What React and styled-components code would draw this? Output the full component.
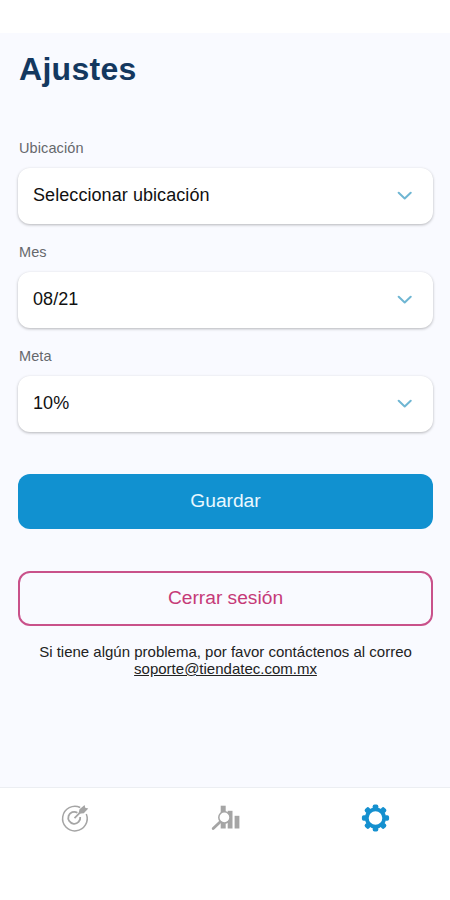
import React from 'react';
import styled, { createGlobalStyle } from 'styled-components';

const GlobalStyle = createGlobalStyle`
    body {
        margin: 0;
        background: #fff;
        font-family: "Liberation Sans", Arial, Helvetica, sans-serif;
    }
    * {
        box-sizing: border-box;
    }
`;

const Screen = styled.div`
    display: flex;
    flex-direction: column;
    width: 450px;
    height: 900px;
    padding-top: 33px;
    background: #fff;
`;

const Content = styled.main`
    flex: 1;
    padding: 17px 17px 0 18px;
    background: #f9faff;
`;

const Title = styled.h1`
    margin: 0 0 50px 0;
    padding-left: 1px;
    color: #14385f;
    font-size: 32px;
    line-height: 38px;
    letter-spacing: 0.3px;
`;

const Field = styled.div`
    margin-bottom: 18px;
`;

const Label = styled.label`
    display: block;
    margin-bottom: 10px;
    padding-left: 1px;
    color: #66686c;
    font-size: 14.5px;
    line-height: 20px;
    letter-spacing: 0.1px;
`;

const Select = styled.button`
    display: flex;
    align-items: center;
    justify-content: space-between;
    width: 100%;
    height: 56px;
    padding: 0 21px 1px 15px;
    border: 0;
    border-radius: 12px;
    background: #fff;
    box-shadow: 0 1px 3px rgba(0, 0, 0, 0.28);
    color: #111;
    font-family: inherit;
    font-size: 18px;
    letter-spacing: 0.07px;
`;

const Button = styled.button`
    display: block;
    width: 100%;
    height: 55px;
    margin-top: 42px;
    padding: 0 0 2px;
    border: ${props => props.$outline ? '2px solid #c9518a' : '0'};
    border-radius: 12px;
    background: ${props => props.$outline ? 'transparent' : '#1191d0'};
    color: ${props => props.$outline ? '#c63a78' : '#e9f8ff'};
    font-family: inherit;
    font-size: 19.2px;
`;

const Help = styled.p`
    margin: 17px 0 0 0;
    color: #222;
    font-size: 15px;
    line-height: 17px;
    text-align: center;
    white-space: nowrap;
`;

const Mail = styled.a`
    color: inherit;
    text-decoration: underline;
`;

const TabBar = styled.nav`
    display: grid;
    grid-template-columns: repeat(3, 150px);
    height: 113px;
    padding-top: 15px;
    border-top: 1px solid #eceef2;
    background: #fff;
`;

const Tab = styled.a`
    display: flex;
    justify-content: center;
    height: 30px;
    color: ${props => props.$active ? '#1590cf' : '#a5a5a5'};
`;

const Chevron = () => (
    <svg width="15" height="9" viewBox="0 0 15 9" fill="none" stroke="#6fb6d3" strokeWidth="2" strokeLinecap="round" strokeLinejoin="round">
        <path d="M1.7 1.7 L7.7 7.4 L13.7 1.7" />
    </svg>
);

const TargetIcon = () => (
    <svg width="30" height="30" viewBox="0 0 30 30" fill="none" stroke="currentColor" strokeWidth="1.5">
        <path d="M20.2 4.5 A12.3 12.3 0 1 0 26.3 11" />
        <path d="M17.4 9.7 A6 6 0 1 0 20.2 14" strokeWidth="1.8" />
        <path d="M14.5 15.2 L20 9.7" strokeWidth="1.8" />
        <path d="M18.5 10.8 L19.5 6.3 L24.6 2 L25.2 4.8 L28.3 5.4 L23.8 10.2 Z" fill="currentColor" stroke="none" />
    </svg>
);

const AnalyticsIcon = () => (
    <svg width="30" height="30" viewBox="0 0 30 30" fill="currentColor">
        <rect x="10.7" y="2.7" width="5" height="22.8" />
        <rect x="17.7" y="7.8" width="4.8" height="17.7" />
        <rect x="24.6" y="12.8" width="4.8" height="12.7" />
        <circle cx="14.4" cy="14.4" r="5.6" fill="#fff" stroke="currentColor" strokeWidth="1.5" />
        <path d="M9.8 19.2 L3.2 25.6" stroke="currentColor" strokeWidth="2.8" strokeLinecap="round" />
    </svg>
);

const TEETH = [0, 45, 90, 135, 180, 225, 270, 315];

const GearIcon = () => (
    <svg width="30" height="30" viewBox="0 0 30 30" fill="currentColor">
        <circle cx="15.5" cy="15" r="8.7" fill="none" stroke="currentColor" strokeWidth="3.8" />
        {TEETH.map(angle => (
            <rect key={angle} x="12.7" y="1.4" width="5.6" height="5" rx="1.8" transform={`rotate(${angle} 15.5 15)`} />
        ))}
    </svg>
);

const fields = [
    { label: 'Ubicación', value: 'Seleccionar ubicación' },
    { label: 'Mes', value: '08/21' },
    { label: 'Meta', value: '10%' },
];

const App = () => {
    return (
        <>
            <GlobalStyle />
            <Screen>
                <Content>
                    <Title>Ajustes</Title>
                    {fields.map(field => (
                        <Field key={field.label}>
                            <Label>{field.label}</Label>
                            <Select type="button">
                                {field.value}
                                <Chevron />
                            </Select>
                        </Field>
                    ))}
                    <Button type="button">Guardar</Button>
                    <Button type="button" $outline>Cerrar sesión</Button>
                    <Help>
                        Si tiene algún problema, por favor contáctenos al correo<br />
                        <Mail>soporte@tiendatec.com.mx</Mail>
                    </Help>
                </Content>
                <TabBar>
                    <Tab><TargetIcon /></Tab>
                    <Tab><AnalyticsIcon /></Tab>
                    <Tab $active><GearIcon /></Tab>
                </TabBar>
            </Screen>
        </>
    );
}

export default App;
